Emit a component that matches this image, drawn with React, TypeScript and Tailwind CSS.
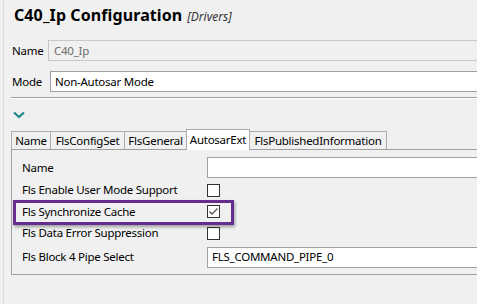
import React from 'react';

const tabs = [
  { label: 'Name', w: 'w-[40px]' },
  { label: 'FlsConfigSet', w: 'w-[75px]' },
  { label: 'FlsGeneral', w: 'w-[63px]' },
  { label: 'AutosarExt', w: 'w-[64px]', active: true },
  { label: 'FlsPublishedInformation', w: 'w-[138px]' },
];

function Checkbox({ checked }: { checked?: boolean }) {
  return (
    <div className="w-[13px] h-[13px] border border-[#333333] bg-white flex items-center justify-center">
      {checked && (
        <svg width="11" height="11" viewBox="0 0 11 11">
          <path d="M1.5 5.5 L4 8 L9.5 2.5" fill="none" stroke="#555555" strokeWidth="1.3" />
        </svg>
      )}
    </div>
  );
}

export default function App() {
  return (
    <div
      className="w-[477px] h-[304px] bg-[#f0f0f0] overflow-hidden pl-[3px] text-[11.5px] tracking-[-0.25px] text-black"
      style={{ fontFamily: '"Noto Sans", sans-serif' }}
    >
      <div className="relative h-full w-[520px] border-l border-[#dadada] pl-[8px]">
        {/* title */}
        <div className="flex items-baseline h-[35px] pt-[5px] pl-[2px]">
          <span className="text-[16px] font-bold leading-[20px] tracking-[0.1px]">C40_Ip Configuration</span>
          <span className="ml-[5px] text-[12px] italic text-[#333333] tracking-normal">[Drivers]</span>
        </div>

        {/* name */}
        <div className="flex items-center h-[31px]">
          <span className="w-[36px]">Name</span>
          <div className="flex-1 h-[21px] border border-[#c8c8c8] bg-[#f0f0f0] pl-[5px] flex items-center text-[#6d6d6d]">
            C40_Ip
          </div>
        </div>

        {/* mode */}
        <div className="flex items-center h-[31px]">
          <span className="w-[38px]">Mode</span>
          <div className="flex-1 h-[21px] border border-[#a0a0a0] bg-white pl-[4px] flex items-center">
            Non-Autosar Mode
          </div>
        </div>

        <div className="ml-[-1px] border-t border-[#a0a0a0] border-b border-b-white" />

        {/* chevron */}
        <div className="h-[30px] pt-[12px] pl-[1px]">
          <svg width="12" height="8" viewBox="0 0 12 8">
            <path d="M1 1.5 L6 6 L11 1.5" fill="none" stroke="#1f8a8a" strokeWidth="2.2" />
          </svg>
        </div>

        {/* tabs */}
        <div className="ml-[-1px] flex items-end h-[20px]">
          {tabs.map((t) => (
            <div
              key={t.label}
              className={
                t.active
                  ? `${t.w} h-[21px] -mb-px -ml-px relative z-10 bg-white border-t border-l border-r border-[#adadad] flex items-center justify-center`
                  : `${t.w} h-[18px] -ml-px first:ml-0 border-t border-l border-r border-[#adadad] bg-[#f0f0f0] flex items-center justify-center`
              }
            >
              {t.label}
            </div>
          ))}
        </div>

        {/* panel */}
        <div className="ml-[-1px] border border-[#a0a0a0] border-r-0 pt-[6px] pb-[4px] pl-[10px]">
          <div className="flex items-center h-[23px]">
            <span className="w-[185px]">Name</span>
            <div className="flex-1 h-[21px] border border-[#a0a0a0] bg-white" />
          </div>
          <div className="flex items-center h-[22px]">
            <span className="w-[185px]">Fls Enable User Mode Support</span>
            <Checkbox />
          </div>
          <div className="flex items-center h-[21px]">
            <span className="w-[185px]">Fls Synchronize Cache</span>
            <Checkbox checked />
          </div>
          <div className="flex items-center h-[22px]">
            <span className="w-[185px]">Fls Data Error Suppression</span>
            <Checkbox />
          </div>
          <div className="flex items-center h-[26px]">
            <span className="w-[185px]">Fls Block 4 Pipe Select</span>
            <div className="flex-1 h-[21px] border border-[#a0a0a0] bg-white pl-[4px] flex items-center">
              FLS_COMMAND_PIPE_0
            </div>
          </div>
        </div>

        {/* highlight */}
        <div className="absolute left-[9px] top-[200px] w-[221px] h-[25px] border-[3px] border-[#652d8e] shadow-[1px_2px_3px_rgba(0,0,0,0.35)]" />
      </div>
    </div>
  );
}
